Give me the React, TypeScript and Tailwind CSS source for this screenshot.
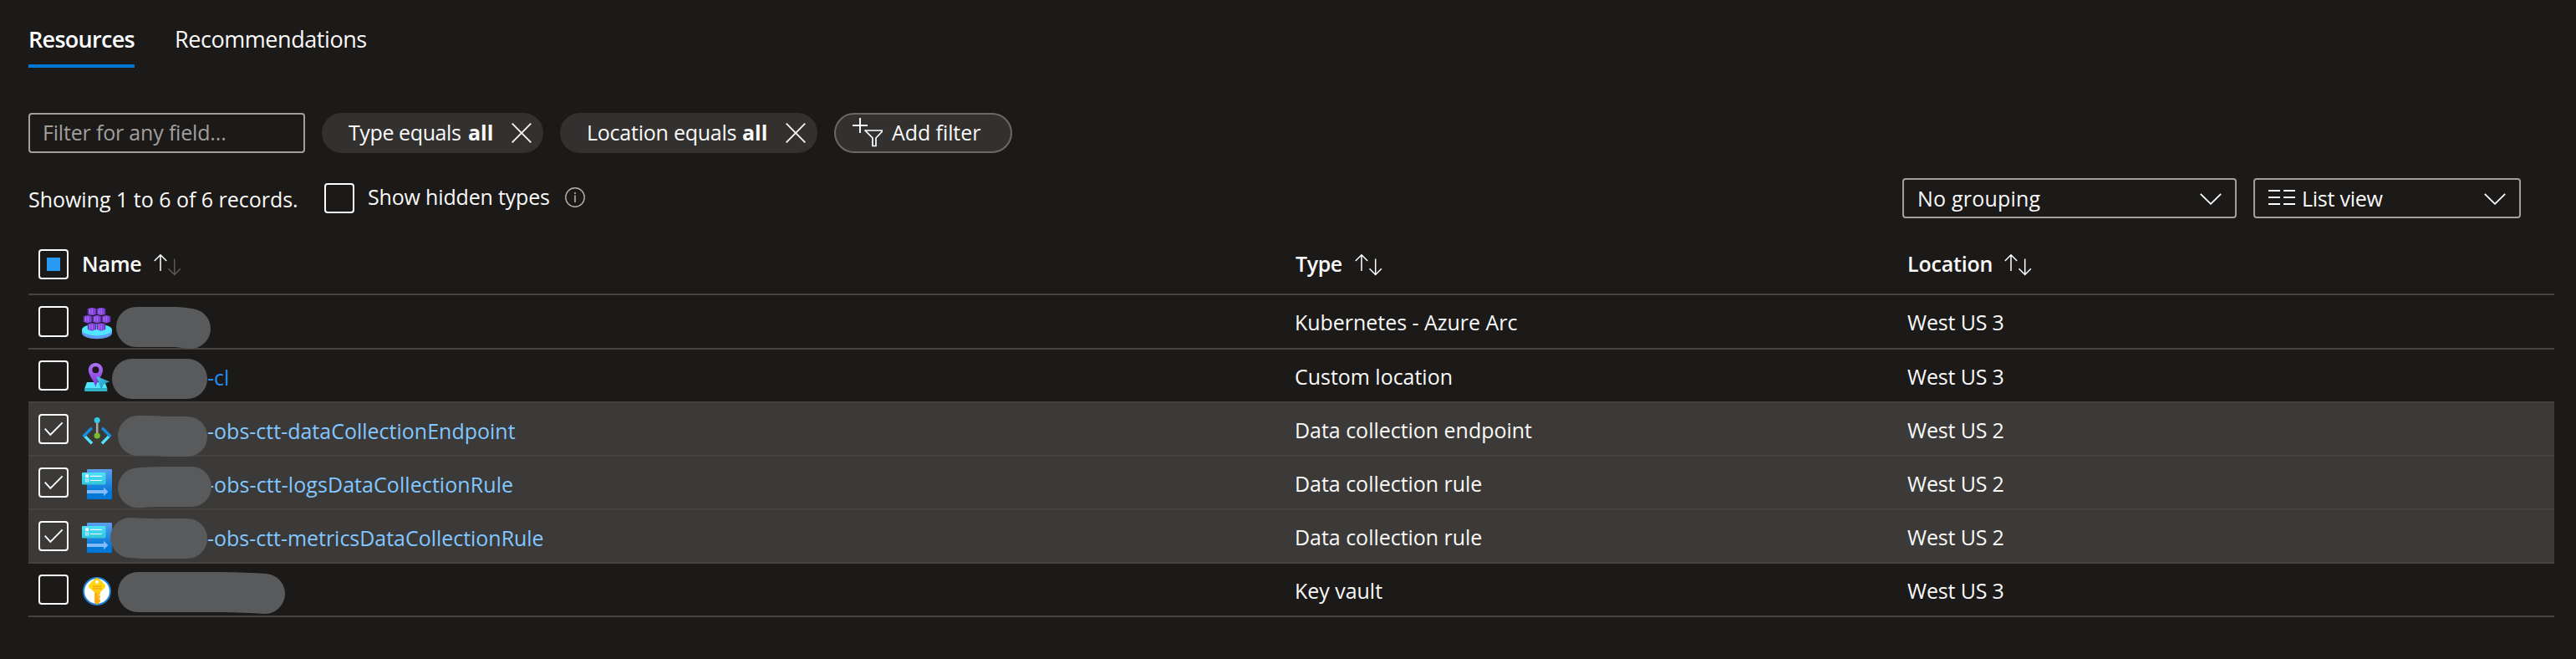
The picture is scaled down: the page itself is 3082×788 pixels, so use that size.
import type { ReactNode } from "react";

function SortArrows({ dimDown = false }: { dimDown?: boolean }) {
  return (
    <svg className="mt-[42px] h-[28px] w-[34px] shrink-0" viewBox="0 0 34 28" fill="none" strokeWidth="1.5">
      <path d="M8 21V2M.8 9 8 1.8 15.2 9" stroke="#fff" />
      <path d="M24.7 6.5v19M17.5 18.3l7.2 7.2 7.2-7.2" stroke={dimDown ? "#5c5a58" : "#fff"} />
    </svg>
  );
}

function Check({ on = false, tall = false }: { on?: boolean; tall?: boolean }) {
  return (
    <span
      className={
        "box-border block w-[36px] shrink-0 rounded-[4px] border-2 border-white " + (tall ? "h-[37px]" : "h-[36px]")
      }
    >
      {on && (
        <svg className="h-[32px] w-[32px]" viewBox="2 2 32 32" fill="none" stroke="#fff" strokeWidth="1.9">
          <path d="M7.7 17.6 14.3 24.8 28.7 10.4" />
        </svg>
      )}
    </span>
  );
}

function CloseIcon() {
  return (
    <svg className="h-[24px] w-[24px]" viewBox="0 0 24 24" fill="none" stroke="#f3f2f1" strokeWidth="1.9">
      <path d="M.7.7l22.6 22.6M23.3.7.7 23.3" />
    </svg>
  );
}

function Chevron() {
  return (
    <svg className="h-[14px] w-[26px]" viewBox="0 0 26 14" fill="none" stroke="#fff" strokeWidth="1.8">
      <path d="M.8.8 13 12.8 25.2.8" />
    </svg>
  );
}

const hexes = [
  [12, 4.5],
  [23, 4.5],
  [7, 13.6],
  [18, 13.6],
  [29, 13.6],
  [12, 22.8],
  [23, 22.8],
];

function ArcIcon() {
  return (
    <svg className="h-[38px] w-[36px]" viewBox="0 0 36 38">
      <path d="M0 26.5v4C0 34 8 37.2 18 37.2S36 34 36 30.5v-4z" fill="#5e9cf0" />
      <ellipse cx="18" cy="26.4" rx="18" ry="7" fill="#50e6ff" />
      {hexes.map(([x, y]) => (
        <g key={`${x}-${y}`}>
          <path
            d={`M${x - 5.2} ${y - 3.2}L${x - 1} ${y - 4.6}L${x + 1} ${y - 4.6}L${x + 5.2} ${y - 3.2}V${y + 3.2}L${x + 1} ${y + 4.6}H${x - 1}L${x - 5.2} ${y + 3.2}Z`}
            fill="#8445dc"
          />
          <path d={`M${x - 2.6} ${y - 2.8}v5.6M${x + 0.2} ${y - 3}v6`} stroke="#b483f2" strokeWidth="0.9" />
          <path d={`M${x - 4.4} ${y - 3}v6M${x + 4.6} ${y - 3}v6`} stroke="#5c2fa0" strokeWidth="1" />
        </g>
      ))}
    </svg>
  );
}

function PinIcon() {
  return (
    <svg className="h-[38px] w-[36px]" viewBox="0 0 36 38">
      <defs>
        <linearGradient id="pin" x1="0" y1="0" x2="0" y2="1">
          <stop offset="0" stopColor="#b274f0" />
          <stop offset="1" stopColor="#7a35dc" />
        </linearGradient>
        <linearGradient id="cursor" x1="0" y1="0" x2="1" y2="1">
          <stop offset="0" stopColor="#45cfe8" />
          <stop offset="1" stopColor="#1a86b5" />
        </linearGradient>
      </defs>
      <path d="M6 25h21.500l2.800 7.500H3.200z" fill="#50e6ff" />
      <path d="M3.200 32.200h27.100v3.800H3.200z" fill="#2fb5cb" />
      <path
        d="M16.400 2c-4.900 0-8.600 3.800-8.600 8.500 0 6.500 6.600 12.500 8.600 20 2-7.500 8.600-13.500 8.600-20C25 5.800 21.300 2 16.400 2zm0 12.300a4 4 0 1 1 0-8 4 4 0 0 1 0 8z"
        fill="url(#pin)"
      />
      <path d="M17.500 18 33 24.300 26 27.500 23 33.800z" fill="url(#cursor)" />
    </svg>
  );
}

function EndpointIcon() {
  return (
    <svg className="h-[38px] w-[36px]" viewBox="0 0 36 38" fill="none" strokeWidth="3.400">
      <path d="M12 34.300 2.600 24.600" stroke="#50e6ff" />
      <path d="M24 34.300 33.400 24.600" stroke="#50e6ff" />
      <path d="M11.800 15.800 1.600 26" stroke="#1490df" />
      <path d="M24.200 15.800 34.400 26" stroke="#1490df" />
      <path d="M18.200 7v17" stroke="#a8a8a8" strokeWidth="2.600" />
      <circle cx="18.200" cy="6.400" r="3.500" fill="#32c8e8" />
      <circle cx="18.200" cy="25" r="3.600" fill="#76bc2d" />
    </svg>
  );
}

function RuleIcon() {
  return (
    <svg className="h-[36px] w-[36px]" viewBox="0 0 36 36">
      <defs>
        <linearGradient id="doc" x1="0" y1="0" x2="0" y2="1">
          <stop offset="0" stopColor="#5a9fee" />
          <stop offset=".8" stopColor="#0078d7" />
        </linearGradient>
        <linearGradient id="card" x1="0" y1="0" x2="0" y2="1">
          <stop offset="0" stopColor="#4ce0fb" />
          <stop offset="1" stopColor="#32c5dd" />
        </linearGradient>
      </defs>
      <rect x="6" width="30" height="36" rx="1" fill="url(#doc)" />
      <rect y="4" width="28.500" height="14.500" rx="1" fill="url(#card)" />
      <rect x="4.300" y="6.300" width="3.800" height="3.800" rx=".8" fill="#fff" />
      <rect x="4.800" y="12" width="2.900" height="2.900" fill="none" stroke="#d5f8ff" />
      <path d="M10 8.300h14M10 13.500h14" stroke="#f2fdff" strokeWidth="1.200" />
      <path d="M6 25.100h20v-3.400l5.500 5.300-5.500 5.300V28.900H6z" fill="#83b9f9" />
    </svg>
  );
}

function KeyIcon() {
  return (
    <svg className="h-[36px] w-[36px]" viewBox="0 0 36 36">
      <defs>
        <linearGradient id="key" x1="0" y1="0" x2="0" y2="1">
          <stop offset="0" stopColor="#ffcb12" />
          <stop offset=".35" stopColor="#ffdc14" />
          <stop offset="1" stopColor="#fea11b" />
        </linearGradient>
      </defs>
      <circle cx="18" cy="18" r="16" fill="#fff" stroke="#1b82d9" strokeWidth="2" />
      <path
        d="M16.200 2.600q1.800-1.400 3.600 0l7.800 7.600q1.400 1.500 0 3.200l-5.600 5.800v2l-1.300 1.300 1.300 1.400v1.600l-1.300 1.400 1.300 1.300v2.300L18 34.300l-3-3V19.200l-6.600-5.800q-1.400-1.700 0-3.200z"
        fill="url(#key)"
      />
      <circle cx="18" cy="6.700" r="2" fill="#fff" />
      <path d="M13 12.300h10.500M13 14.800h10.500" stroke="#f5a614" strokeWidth="1.400" />
      <path d="M17 20v12" stroke="#ff9e1a" strokeWidth="1.400" />
    </svg>
  );
}

type Row = {
  icon: ReactNode;
  iconTop: string;
  mask: string;
  link?: string;
  linkSpacing?: string;
  type: string;
  location: string;
  selected?: boolean;
};

const rows: Row[] = [
  { icon: <ArcIcon />, iconTop: "mt-[15px]", mask: "M29 38H76Q84 38.500 94 40", type: "Kubernetes - Azure Arc", location: "West US 3" },
  { icon: <PinIcon />, iconTop: "mt-[14px]", mask: "M24 35H90", link: "-cl", type: "Custom location", location: "West US 3" },
  { icon: <EndpointIcon />, iconTop: "mt-[14px]", mask: "M31 39Q50 38.500 64 40H90", link: "-obs-ctt-dataCollectionEndpoint", type: "Data collection endpoint", location: "West US 2", selected: true },
  { icon: <RuleIcon />, iconTop: "mt-[15px]", mask: "M31 37.300Q50 35.500 64 36H95", link: "-obs-ctt-logsDataCollectionRule", linkSpacing: "tracking-[0.07px]", type: "Data collection rule", location: "West US 2", selected: true },
  { icon: <RuleIcon />, iconTop: "mt-[15px]", mask: "M22 33Q45 34.500 60 34H90", link: "-obs-ctt-metricsDataCollectionRule", linkSpacing: "tracking-[-0.03px]", type: "Data collection rule", location: "West US 2", selected: true },
  { icon: <KeyIcon />, iconTop: "mt-[15px]", mask: "M31 34H130Q160 34.500 183 36", type: "Key vault", location: "West US 3" },
];

function ResourceRow({ row, first }: { row: Row; first: boolean }) {
  return (
    <div
      className={
        "flex items-start border-b-2 border-[#454341] leading-[64px] " +
        (first ? "h-[65px] " : "h-[64px] ") +
        (row.selected ? "bg-[#3b3a38]" : "")
      }
    >
      <div className="flex w-[1515px] items-start pl-[12px]">
        <div className="mt-[13px]">
          <Check on={row.selected} tall={first} />
        </div>
        <div className={"ml-[16px] " + row.iconTop}>{row.icon}</div>
        <div className="relative h-[62px] w-[114px]">
          <svg className="absolute top-0 left-0 z-10 h-[64px] w-[220px] overflow-visible" viewBox="0 0 220 64" fill="none">
            <path d={row.mask} stroke="#595a5c" strokeWidth="48" strokeLinecap="round" strokeLinejoin="round" />
          </svg>
        </div>
        {row.link && (
          <a className={"mt-px " + (row.linkSpacing ?? "") + (row.selected ? " text-[#82c7ff]" : " text-[#2090ee]")}>
            {row.link}
          </a>
        )}
      </div>
      <div className="w-[733px] tracking-[-0.03px]">{row.type}</div>
      <div className="tracking-[-0.16px]">{row.location}</div>
    </div>
  );
}

export default function App() {
  return (
    <div className="h-[788px] w-[3082px] overflow-hidden bg-[#1b1a19] pr-[26px] pl-[34px] font-['Open_Sans',sans-serif] text-[25px] whitespace-nowrap text-[#faf9f8]">
      <div className="flex h-[81px] items-start pt-[30px] text-[27px] leading-[33px]">
        <div className="w-[127px] border-b-4 border-[#0078d4] pb-[14px] font-semibold tracking-[-0.7px] text-white">
          Resources
        </div>
        <div className="ml-[48px] tracking-[-0.44px]">Recommendations</div>
      </div>

      <div className="mt-[54px] flex h-[48px]">
        <div className="w-[331px] rounded-[4px] border-2 border-[#a19f9d] pl-[15px] leading-[42px] tracking-[-0.18px] text-[#a19f9d]">
          Filter for any field...
        </div>
        <div className="ml-[20px] flex w-[265px] items-start rounded-full bg-[#323130] pl-[32px] leading-[46px]">
          <span className="w-[143px] tracking-[-0.4px]">Type equals</span>
          <span className="w-[52px] font-bold">all</span>
          <span className="mt-[12px]">
            <CloseIcon />
          </span>
        </div>
        <div className="ml-[20px] flex w-[308px] items-start rounded-full bg-[#323130] pl-[32px] leading-[46px]">
          <span className="w-[186px] tracking-[-0.24px]">Location equals</span>
          <span className="w-[52px] font-bold">all</span>
          <span className="mt-[12px]">
            <CloseIcon />
          </span>
        </div>
        <div className="ml-[20px] flex w-[213px] items-start rounded-full border-2 border-[#6b6967] bg-[#323130] pl-[20px] leading-[42px]">
          <svg className="mt-[4px] h-[36px] w-[38px]" viewBox="0 0 38 36" fill="none" stroke="#fff" strokeWidth="1.900">
            <path d="M9 0v18M0 9h18" />
            <path d="M14.500 15h20.700v1.500L28 24v9.500h-4V24l-8.500-8.500z" strokeWidth="1.700" />
          </svg>
          <span className="ml-[9px] tracking-[-0.08px]">Add filter</span>
        </div>
      </div>

      <div className="mt-[30px] flex h-[48px] items-start leading-[48px]">
        <div className="mt-px w-[354px] tracking-[-0.02px]">Showing 1 to 6 of 6 records.</div>
        <div className="mt-[6px]">
          <Check />
        </div>
        <div className="-mt-[2px] ml-[16px] w-[236px] tracking-[-0.17px]">Show hidden types</div>
        <svg className="mt-[11px] h-[24px] w-[24px]" viewBox="0 0 24 24" fill="none" stroke="#b3b0ad" strokeWidth="1.400">
          <circle cx="12" cy="12" r="11.200" />
          <path d="M12 9.500v8.500M12 6v2" strokeWidth="1.600" />
        </svg>
        <div className="ml-auto flex h-[48px] w-[400px] items-start justify-between rounded-[4px] border-2 border-[#a19f9d] pr-[16px] pl-[16px] leading-[44px]">
          <span className="tracking-[0.2px]">No grouping</span>
          <span className="mt-[16px]">
            <Chevron />
          </span>
        </div>
        <div className="mr-[40px] ml-[20px] flex h-[48px] w-[320px] items-start rounded-[4px] border-2 border-[#a19f9d] pr-[16px] pl-[16px] leading-[44px]">
          <svg className="mt-[11px] h-[20px] w-[32px]" viewBox="0 0 32 20" stroke="#fff" strokeWidth="2">
            <path d="M0 2h14M18 2h14M0 10h14M18 10h14M0 18h14M18 18h14" />
          </svg>
          <span className="ml-[8px] tracking-[-0.25px]">List view</span>
          <span className="mt-[16px] ml-auto">
            <Chevron />
          </span>
        </div>
      </div>

      <div className="flex h-[92px] items-start border-b-2 border-[#454341] leading-[48px] font-semibold">
        <div className="flex w-[1515px] items-start pl-[12px]">
          <span className="mt-[37px] flex h-[36px] w-[36px] items-center justify-center rounded-[4px] border-2 border-white">
            <span className="h-[16px] w-[16px] bg-[#2899f5]" />
          </span>
          <span className="mt-[30px] ml-[16px] w-[86px] tracking-[-0.2px]">Name</span>
          <SortArrows dimDown />
        </div>
        <div className="flex w-[733px] items-start">
          <span className="mt-[30px] w-[72px] pl-px tracking-[-0.4px]">Type</span>
          <SortArrows />
        </div>
        <div className="flex items-start">
          <span className="mt-[30px] w-[116px] tracking-[-0.2px]">Location</span>
          <SortArrows />
        </div>
      </div>

      {rows.map((row, i) => (
        <ResourceRow key={i} row={row} first={i === 0} />
      ))}
    </div>
  );
}
